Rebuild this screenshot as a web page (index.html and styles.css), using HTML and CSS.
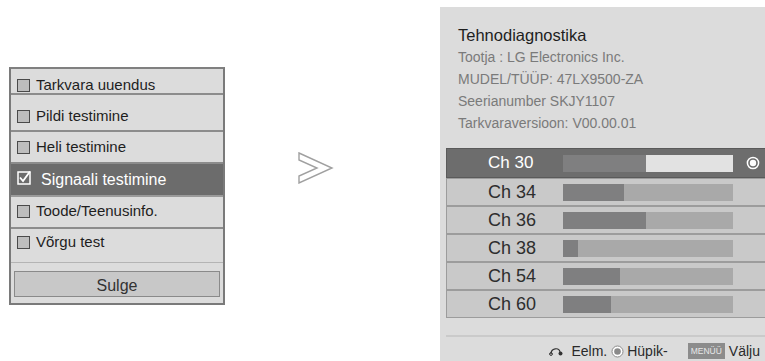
FILE: index.html
```html
<!DOCTYPE html>
<html>

<head>
    <meta charset="UTF-8">
    <title>Tehnodiagnostika</title>
    <link rel="stylesheet" href="styles.css">
</head>

<body>
    <div id="screen">
        <!-- vasak menüü -->
        <div class="menu">
            <div class="menu-row r1"><span class="box"></span>Tarkvara uuendus</div>
            <div class="menu-row r2"><span class="box"></span>Pildi testimine</div>
            <div class="menu-row r3"><span class="box"></span>Heli testimine</div>
            <div class="menu-row active">
                <svg class="check" width="14" height="14" viewBox="0 0 14 14">
                    <rect x="1" y="1" width="12" height="12" fill="none" stroke="#fff" stroke-width="1.5" />
                    <path d="M3 6.5 L6 10 L13 0.5" fill="none" stroke="#fff" stroke-width="1.8" />
                </svg>Signaali testimine
            </div>
            <div class="menu-row r5"><span class="box"></span>Toode/Teenusinfo.</div>
            <div class="menu-row r6"><span class="box"></span>Võrgu test</div>
            <div class="menu-foot">
                <div class="btn">Sulge</div>
            </div>
        </div>

        <!-- nool -->
        <svg class="arrow" width="36" height="32" viewBox="0 0 36 32">
            <polygon points="1,1 34,16 1,31 1,24 19,16 1,8" fill="#fff" stroke="#a0a0a0" stroke-width="1.4" />
        </svg>

        <!-- parem paneel -->
        <div class="panel">
            <div class="title">Tehnodiagnostika</div>
            <div class="info">Tootja : LG Electronics Inc.</div>
            <div class="info">MUDEL/TÜÜP: 47LX9500-ZA</div>
            <div class="info">Seerianumber SKJY1107</div>
            <div class="info">Tarkvaraversioon: V00.00.01</div>

            <div class="channels">
                <div class="ch sel">
                    <span class="ch-name">Ch 30</span>
                    <span class="bar"><span class="fill" style="width: 83px"></span></span>
                    <svg class="radio" width="14" height="14" viewBox="0 0 14 14">
                        <circle cx="7" cy="7" r="5.6" fill="none" stroke="#fff" stroke-width="1.5" />
                        <circle cx="7" cy="7" r="3.2" fill="#fff" />
                    </svg>
                </div>
                <div class="ch"><span class="ch-name">Ch 34</span><span class="bar"><span class="fill" style="width: 61px"></span></span></div>
                <div class="ch"><span class="ch-name">Ch 36</span><span class="bar"><span class="fill" style="width: 83px"></span></span></div>
                <div class="ch"><span class="ch-name">Ch 38</span><span class="bar"><span class="fill" style="width: 15px"></span></span></div>
                <div class="ch"><span class="ch-name">Ch 54</span><span class="bar"><span class="fill" style="width: 57px"></span></span></div>
                <div class="ch"><span class="ch-name">Ch 60</span><span class="bar"><span class="fill" style="width: 48px"></span></span></div>
            </div>

            <div class="foot">
                <svg class="back" width="14" height="10" viewBox="0 0 14 10">
                    <path d="M2 8 C2 2, 10 1, 11 6" fill="none" stroke="#333" stroke-width="1.2" />
                    <circle cx="2" cy="8" r="1.4" fill="none" stroke="#333" stroke-width="1" />
                    <circle cx="11.5" cy="7.5" r="2" fill="#333" />
                </svg>
                <span class="lbl">Eelm.</span>
                <svg class="dot" width="13" height="13" viewBox="0 0 13 13">
                    <circle cx="6.5" cy="6.5" r="5.5" fill="#fff" stroke="#8a8a8a" stroke-width="1" />
                    <circle cx="6.5" cy="6.5" r="3.3" fill="#8a8a8a" />
                </svg>
                <span class="lbl">Hüpik-</span>
                <span class="key">MENÜÜ</span>
                <span class="lbl">Välju</span>
            </div>
        </div>
    </div>
</body>

</html>
```

FILE: styles.css
```css
* {
    margin: 0;
    padding: 0;
}

body {
    background-color: #fff;
    font-family: "Liberation Sans", Arial, sans-serif;
}

/* kogu ekraan */
#screen {
    width: 765px;
    height: 361px;
    overflow: hidden;
    display: flex;
    align-items: flex-start;
}

/* vasak menüü */
.menu {
    width: 212px;
    margin: 67px 0 0 9px;
    background-color: #dcdcdc;
    border: 2px solid #7a7a7a;
    border-top-color: #808080;
}

/* tekst ei ole ridade keskel, paigutame paddinguga */
.menu-row {
    box-sizing: border-box;
    display: flex;
    align-items: flex-start;
    line-height: 18px;
    padding-left: 6px;
    font-size: 15px;
    color: #1e1e1e;
    border-bottom: 2px solid #8c8c8c;
}

.r1 {
    height: 26px;
    padding-top: 7px;
}

.r2 {
    height: 37px;
    padding-top: 12px;
}

.r3 {
    height: 32px;
    padding-top: 6px;
}

.r5 {
    height: 32px;
    padding-top: 5px;
}

.r6 {
    height: 34px;
    padding-top: 4px;
    border-bottom: 1px solid #b4b4b4;
}

.box {
    width: 11px;
    height: 11px;
    margin-top: 3px;
    background-color: #bdbdbd;
    border: 1px solid #4a4a4a;
    margin-right: 6px;
}

/* valitud rida */
.menu-row.active {
    background-color: #6c6c6c;
    color: #fff;
    font-size: 16px;
    height: 33px;
    padding-top: 7px;
    border-bottom-color: #9a9a9a;
}

.check {
    margin-right: 10px;
    margin-top: 0;
}

.menu-foot {
    height: 40px;
    padding: 8px 3px 0 3px;
    box-sizing: border-box;
}

.btn {
    box-sizing: border-box;
    height: 26px;
    padding-top: 3px;
    line-height: 22px;
    background-color: #c8c8c8;
    border: 1px solid #8a8a8a;
    text-align: center;
    font-size: 16px;
    color: #333;
}

/* nool keskel */
.arrow {
    margin: 152px 0 0 73px;
    flex: none;
}

/* parem paneel */
.panel {
    flex: none;
    width: 325px;
    height: 354px;
    margin: 7px 0 0 106px;
    background-color: #dcdcdc;
    overflow: hidden;
}

.title {
    padding: 17px 0 0 18px;
    font-size: 16.5px;
    line-height: 22px;
    color: #1e1e1e;
}

.info {
    padding-left: 18px;
    font-size: 14px;
    line-height: 22px;
    color: #7a7a7a;
}

.channels {
    margin: 14px -10px 0 6px;
}

.ch {
    height: 26px;
    display: flex;
    align-items: center;
    background-color: #c9c9c9;
    border: 1px solid #9c9c9c;
    border-right: none;
    color: #2e2e2e;
    font-size: 18px;
}

.ch.sel {
    height: 28px;
    background-color: #6d6d6d;
    border-color: #5a5a5a;
    color: #fff;
    font-size: 17px;
}

.ch-name {
    width: 116px;
    padding-left: 41px;
    box-sizing: border-box;
    flex: none;
}

.bar {
    width: 170px;
    height: 17px;
    background-color: #a9a9a9;
    display: flex;
    flex: none;
}

.ch.sel .bar {
    background-color: #e2e2e2;
}

.fill {
    background-color: #7f7f80;
}

.radio {
    margin-left: 13px;
}

/* jalus */
.foot {
    margin: 17px 0 0 6px;
    padding: 5px 2px 0 0;
    border-top: 2px solid #cacaca;
    display: flex;
    align-items: center;
    justify-content: flex-end;
    font-size: 14px;
    line-height: 18px;
    color: #2a2a2a;
}

.back {
    margin-right: 8px;
}

.lbl {
    margin-right: 3px;
}

.dot {
    margin: 0 3px 0 1px;
}

.key {
    background-color: #8c8c8c;
    color: #e8e8e8;
    font-size: 8.5px;
    line-height: 12px;
    padding: 2px 3px;
    margin: 0 4px 0 17px;
}
```
